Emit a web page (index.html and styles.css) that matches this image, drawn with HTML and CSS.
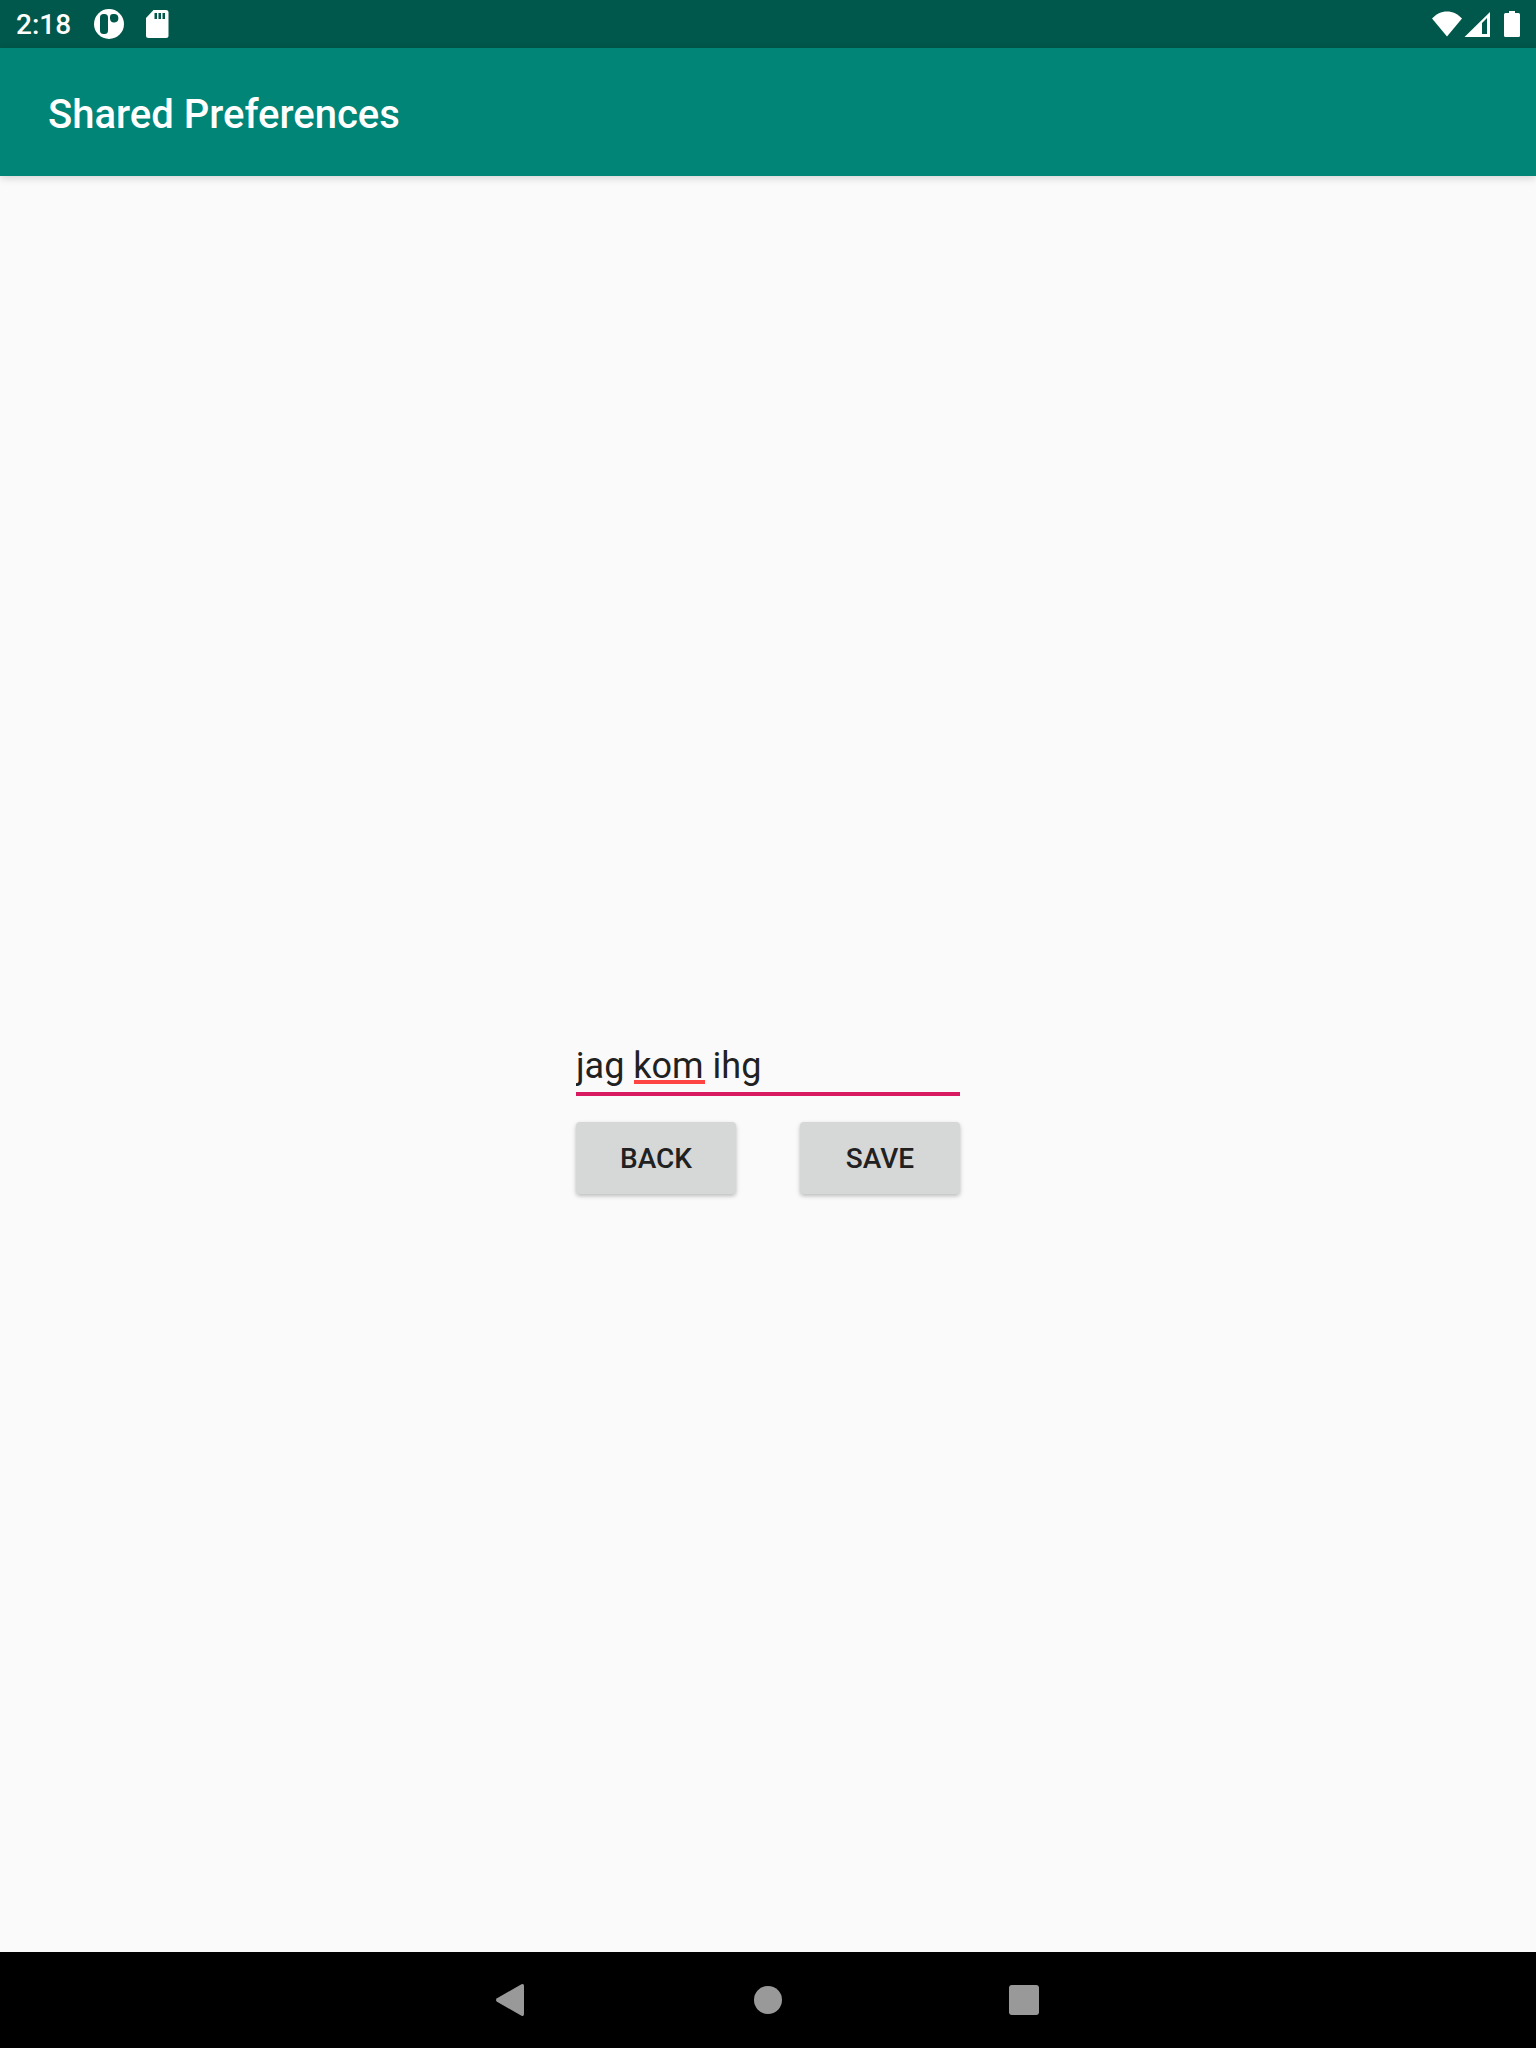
FILE: index.html
```html
<!DOCTYPE html>
<html lang="en">
<head>
<meta charset="utf-8">
<meta name="viewport" content="width=device-width, initial-scale=1">
<title>Shared Preferences</title>
<link rel="stylesheet" href="styles.css">
</head>
<body>
<div class="screen">
  <div class="status-bar">
    <div class="status-group">
      <time class="clock">2:18</time>
      <svg class="status-icon" viewBox="0 0 48 48" aria-hidden="true">
        <circle cx="24" cy="24" r="15"/>
        <rect class="cutout" x="15" y="14" width="8" height="20" rx="3.500"/>
        <path class="cutout" d="M25 17a3 3 0 0 1 3-3h1a4.200 4.200 0 1 1-4 4.500z"/>
      </svg>
      <svg class="status-icon" viewBox="0 0 48 48" aria-hidden="true">
        <path d="M20.500 10H33a2.500 2.500 0 0 1 2.500 2.500v23A2.500 2.500 0 0 1 33 38H15.500a2.500 2.500 0 0 1-2.500-2.500V18z"/>
        <path class="cutout" d="M21.500 13h2.500v6h-2.500zM25.500 13h2.500v6h-2.500zM29.500 13h2.500v6h-2.500z"/>
      </svg>
    </div>
    <div class="status-group">
      <svg class="wifi" viewBox="0 0 32 48" aria-hidden="true">
        <path d="M0 18.500C4.500 14 9 11.500 15 11.500S25.500 14 30 18.500L15 36.500z"/>
      </svg>
      <svg class="signal" viewBox="0 0 26 48" aria-hidden="true">
        <path fill-rule="evenodd" d="M.5 37L26 12v25zM18 34h5V18l-5 5z"/>
      </svg>
      <svg class="battery" viewBox="0 0 16 48" aria-hidden="true">
        <path d="M5 11h6v2h3.500q1.500 0 1.500 1.500v21q0 1.500-1.500 1.500h-13Q0 37 0 35.500v-21Q0 13 1.500 13H5z"/>
      </svg>
    </div>
  </div>
  <header class="app-bar"><h1 class="title">Shared Preferences</h1></header>
  <main class="content">
    <div class="field">
      <input class="text-input" type="text" value="jag kom ihg" aria-label="Preference text" spellcheck="false">
      <span class="spelling-mark" aria-hidden="true"></span>
    </div>
    <div class="actions">
      <button class="button" type="button">BACK</button>
      <button class="button" type="button">SAVE</button>
    </div>
  </main>
  <nav class="nav-bar" aria-label="System">
    <button class="nav-button" type="button" aria-label="Back">
      <svg class="nav-icon" viewBox="0 0 48 48" aria-hidden="true"><path d="M9 22.200L33.500 8.200Q36 7.200 36 10v28q0 2.800-2.500 1.800L9 25.800Q7 24 9 22.200z"/></svg>
    </button>
    <button class="nav-button" type="button" aria-label="Home">
      <svg class="nav-icon" viewBox="0 0 48 48" aria-hidden="true"><circle cx="24" cy="24" r="14"/></svg>
    </button>
    <button class="nav-button" type="button" aria-label="Recent apps">
      <svg class="nav-icon" viewBox="0 0 48 48" aria-hidden="true"><rect x="9" y="9" width="30" height="30" rx="3"/></svg>
    </button>
  </nav>
</div>
</body>
</html>
```
FILE: styles.css
```css
* {
  box-sizing: border-box;
}

body {
  margin: 0;
  font-family: Roboto, "Liberation Sans", sans-serif;
  background: #fafafa;
  color: #212121;
}

.screen {
  display: flex;
  flex-direction: column;
  min-height: 100vh;
}

.status-bar {
  display: flex;
  justify-content: space-between;
  height: 48px;
  padding: 0 16px;
  background: #00574b;
  color: #fff;
}

.status-group {
  display: flex;
  align-items: center;
}

.clock {
  margin-right: 14px;
  padding-top: 2px;
  font-size: 28px;
  font-weight: 500;
  line-height: 46px;
}

.status-icon {
  width: 48px;
  height: 48px;
  fill: #fff;
}

.cutout {
  fill: #00574b;
}

.wifi,
.signal,
.battery {
  height: 48px;
  fill: #fff;
}

.wifi {
  width: 32px;
}

.signal {
  width: 26px;
  margin-right: 14px;
}

.battery {
  width: 16px;
}

.app-bar {
  display: flex;
  align-items: center;
  height: 128px;
  padding: 6px 48px 0;
  background: #008577;
  box-shadow: 0 2px 8px rgba(0, 0, 0, 0.16);
}

.title {
  margin: 0;
  color: #fff;
  font-size: 40px;
  font-weight: 500;
  line-height: 48px;
}

.content {
  flex: 1;
  display: grid;
  grid-template-rows: 1fr auto 1fr;
  grid-template-columns: minmax(0, 384px);
  justify-content: center;
}

.field {
  grid-row: 2;
  position: relative;
}

.text-input {
  display: block;
  width: 100%;
  height: 64px;
  padding: 13px 0 5px;
  border: 0;
  border-bottom: 4px solid #d81b60;
  border-radius: 0;
  outline: 0;
  background: transparent;
  color: #212121;
  font: 400 36px/42px Roboto, "Liberation Sans", sans-serif;
}

.spelling-mark {
  position: absolute;
  left: 58px;
  bottom: 12px;
  width: 71px;
  height: 4px;
  background: #ff4444;
}

.actions {
  grid-row: 3;
  display: flex;
  align-items: flex-start;
  justify-content: space-between;
  padding-top: 26px;
}

.button {
  width: 160px;
  height: 72px;
  padding: 2px 0 0;
  border: 0;
  border-radius: 4px;
  background: #d6d7d7;
  box-shadow: 0 2px 4px rgba(0, 0, 0, 0.26);
  color: #212121;
  font: 500 28px/32px Roboto, "Liberation Sans", sans-serif;
}

.nav-bar {
  display: flex;
  justify-content: center;
  gap: 160px;
  height: 96px;
  background: #000;
}

.nav-button {
  display: flex;
  align-items: center;
  justify-content: center;
  width: 96px;
  height: 96px;
  padding: 0;
  border: 0;
  background: transparent;
}

.nav-icon {
  width: 48px;
  height: 48px;
  fill: #999;
}
```
